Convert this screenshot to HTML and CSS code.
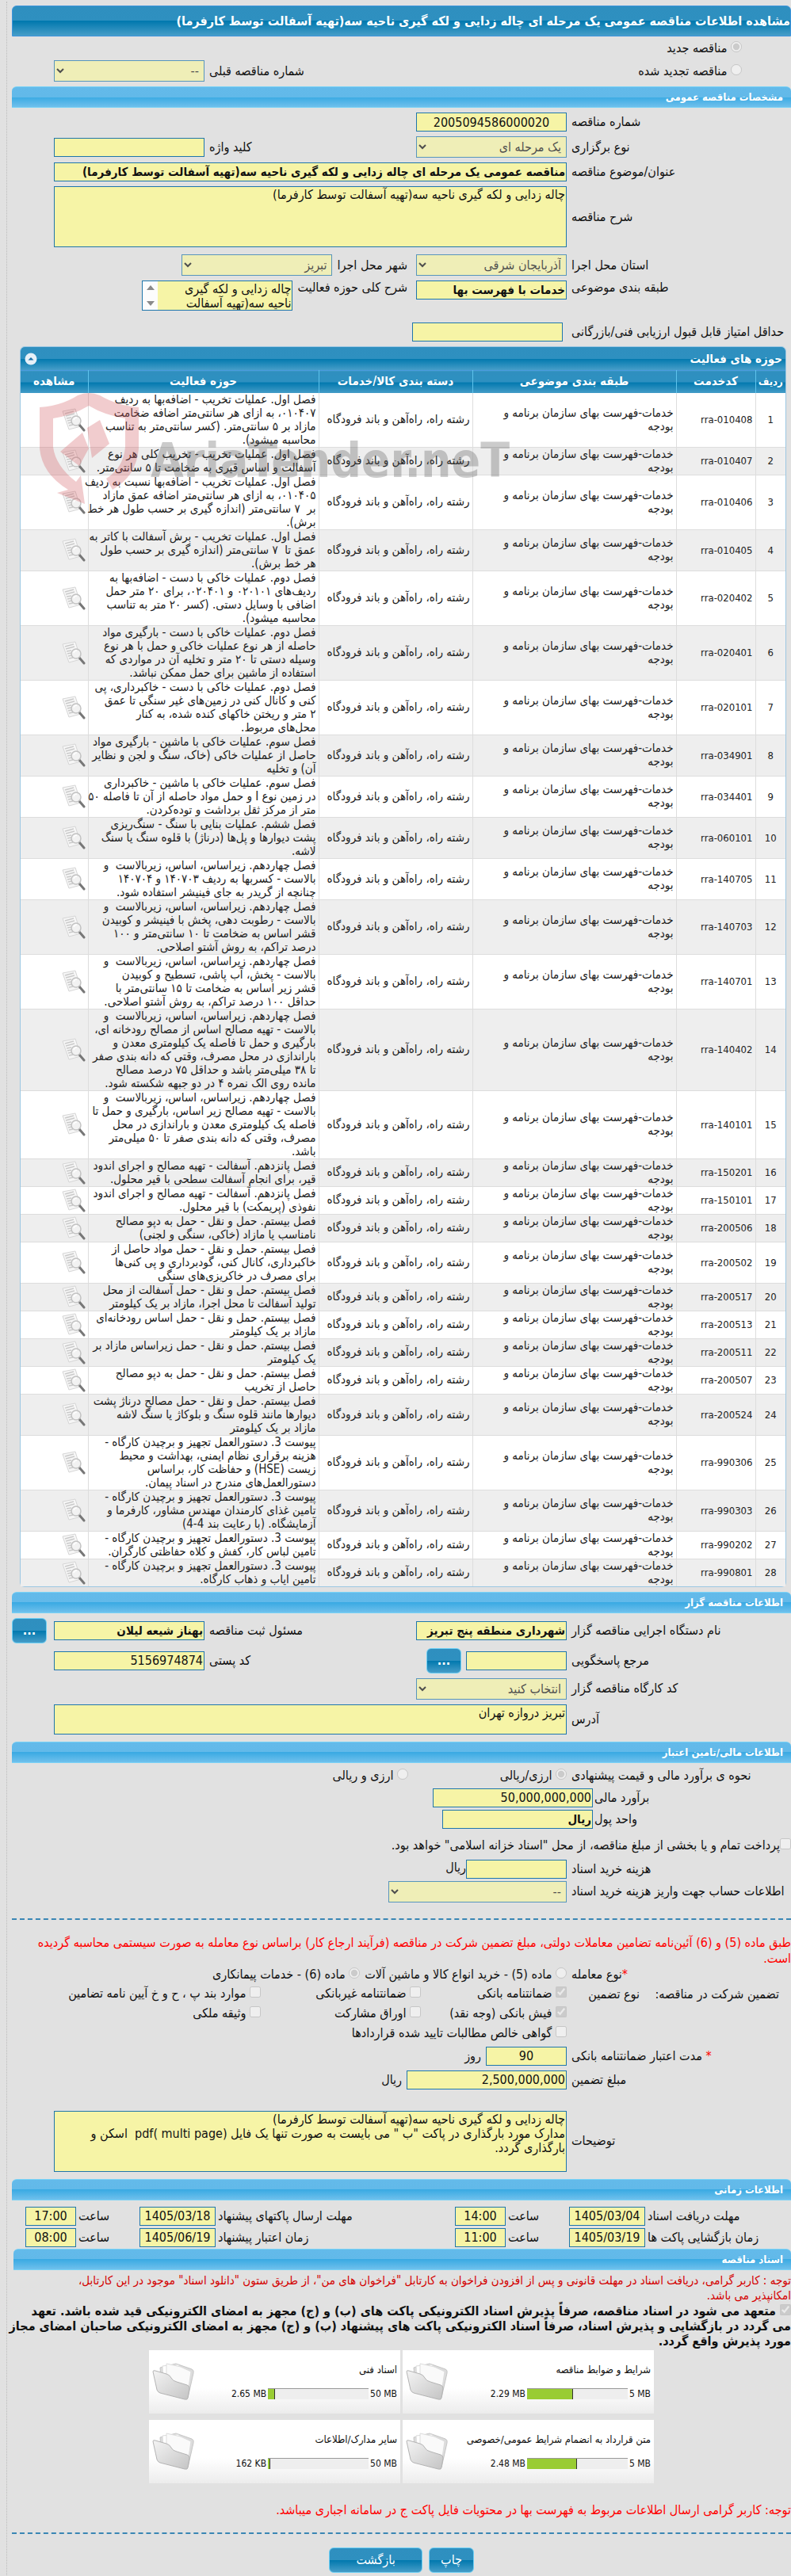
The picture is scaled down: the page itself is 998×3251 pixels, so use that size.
FILE: index.html
```html
<!DOCTYPE html>
<html lang="fa" dir="rtl">
<head>
  <meta charset="UTF-8">
  <meta name="viewport" content="width=device-width, initial-scale=1.0">
  <title>مشاهده اطلاعات مناقصه عمومی</title>
  <link rel="stylesheet" href="styles.css">
</head>
<body>

<!-- shared icons -->
<svg class="defs" width="0" height="0" aria-hidden="true">
  <defs>
    <linearGradient id="fold" x1="0" y1="0" x2="1" y2="1">
      <stop offset="0" stop-color="#f4f4f4"/>
      <stop offset="1" stop-color="#c4c4c4"/>
    </linearGradient>
  </defs>
  <symbol id="icon-view" viewBox="0 0 30 30">
    <path d="M1 4 L17 1 L24 23 L9 27 Z" fill="#f6f6f6" stroke="#d6d6d6"/>
    <path d="M4 7 l11 -3 M5 10 l11 -3 M6 13 l6 -1 M7 16 l5 -1 M8 19 l5 -1 M9 22 l5 -1" stroke="#cacaca" stroke-width="1.4" fill="none"/>
    <path d="M22 21 L28 28" stroke="#777" stroke-width="3" stroke-linecap="round"/>
    <circle cx="18" cy="16" r="6" fill="#f2f2f2" stroke="#c2c2c2" stroke-width="1.5"/>
    <path d="M15 15 a4 4 0 0 1 4 -3" stroke="#fff" stroke-width="1.5" fill="none"/>
  </symbol>
  <symbol id="icon-folder" viewBox="0 0 54 48">
    <path d="M10 6 L30 1 L50 8 Q53 9 52 13 L45 44 L12 34 Z" fill="#dcdcdc" stroke="#c6c6c6"/>
    <path d="M13 4 L32 2 L46 12 L42 36 L14 30 Z" fill="#fff" stroke="#dadada"/>
    <path d="M18 1 L36 5 L49 11 L45 38 L18 30 Z" fill="#fafafa" stroke="#dcdcdc"/>
    <path d="M1 11 Q1 9 4 10 L18 14 Q22 15 24 19 Q26 23 31 24 L44 28 Q47 29 47 32 L45 44 Q45 47 41 46 L10 38 Q7 37 6 34 Z" fill="url(#fold)" stroke="#b4b4b4"/>
  </symbol>
</svg>

<div class="page">
  <h1 class="title-bar">مشاهده اطلاعات مناقصه عمومی یک مرحله ای چاله زدایی و لکه گیری ناحیه سه(تهیه آسفالت توسط کارفرما)</h1>

  <div class="row kind first"><label><input type="radio" name="kind" checked disabled> مناقصه جدید</label></div>
  <div class="row kind">
    <label><input type="radio" name="kind" disabled> مناقصه تجدید شده</label>
    <label class="lbl2" for="prev">شماره مناقصه قبلی</label>
    <select id="prev" class="w-field" disabled><option>--</option></select>
    <span class="tail"></span>
  </div>

  <!-- مشخصات -->
  <h2 class="bar">مشخصات مناقصه عمومی</h2>
  <div class="row">
    <label class="lbl" for="num">شماره مناقصه</label>
    <input id="num" type="text" class="w-field center" value="2005094586000020" readonly>
  </div>
  <div class="row">
    <label class="lbl" for="type">نوع برگزاری</label>
    <select id="type" class="w-field" disabled><option>یک مرحله ای</option></select>
    <label class="lbl2" for="key">کلید واژه</label>
    <input id="key" type="text" class="w-field" readonly>
    <span class="tail"></span>
  </div>
  <div class="row">
    <label class="lbl" for="subject">عنوان/موضوع مناقصه</label>
    <input id="subject" type="text" class="fill strong" value="مناقصه عمومی یک مرحله ای چاله زدایی و لکه گیری ناحیه سه(تهیه آسفالت توسط کارفرما)" readonly>
    <span class="tail"></span>
  </div>
  <div class="row">
    <label class="lbl" for="desc">شرح مناقصه</label>
    <textarea id="desc" class="fill tall" readonly>چاله زدایی و لکه گیری ناحیه سه(تهیه آسفالت توسط کارفرما)</textarea>
    <span class="tail"></span>
  </div>
  <div class="row gap-top">
    <label class="lbl" for="state">استان محل اجرا</label>
    <select id="state" class="w-field" disabled><option>آذربایجان شرقی</option></select>
    <label class="next" for="city">شهر محل اجرا</label>
    <select id="city" class="w-field" disabled><option>تبریز</option></select>
  </div>
  <div class="row top">
    <label class="lbl" for="cat">طبقه بندی موضوعی</label>
    <input id="cat" type="text" class="w-field strong" value="خدمات با فهرست بها" readonly>
    <label class="next" for="scope">شرح کلی حوزه فعالیت</label>
    <textarea id="scope" class="w-field short scroll" readonly>چاله زدایی و لکه گیری ناحیه سه(تهیه آسفالت توسط کارفرما)</textarea>
  </div>
  <div class="row score">
    <label class="lbl" for="score">حداقل امتیاز قابل قبول ارزیابی فنی/بازرگانی</label>
    <input id="score" type="text" class="w-field" readonly>
  </div>

  <!-- حوزه های فعالیت -->
  <div class="panel">
    <div class="panel-head">
      <span>حوزه های فعالیت</span>
      <button type="button" class="collapse" aria-label="بستن">
        <svg width="16" height="16" viewBox="0 0 16 16"><circle cx="8" cy="8" r="7.5" fill="#e6f0f8"/><path d="M4.500 9.500 L8 6 L11.500 9.500 Z" fill="#1a6fa8"/></svg>
      </button>
    </div>
    <table>
      <colgroup>
        <col class="c-row"><col class="c-code"><col class="c-cat"><col class="c-group"><col class="c-act"><col class="c-view">
      </colgroup>
      <thead>
        <tr><th>ردیف</th><th>کدخدمت</th><th>طبقه بندی موضوعی</th><th>دسته بندی کالا/خدمات</th><th>حوزه فعالیت</th><th>مشاهده</th></tr>
      </thead>
      <tbody id="services"></tbody>
    </table>
    <svg class="watermark" viewBox="0 0 610 140" aria-hidden="true">
      <g fill="#d4595f" fill-rule="evenodd">
        <path d="M0 18 Q28 16 48 3 Q62 -3 76 3 Q98 16 125 18 V70 Q122 105 92 122 L84 108 Q106 94 108 68 V32 Q82 28 62 16 Q42 28 17 32 V68 Q20 92 46 112 L52 104 L57 140 L22 126 L36 122 Q3 102 0 70 Z"/>
        <path d="M26 74 L54 50 L62 70 L50 92 Z M60 44 L76 34 L88 64 L66 82 Z"/>
      </g>
      <text x="140" y="106">AriaTender.neT</text>
    </svg>
  </div>

  <!-- مناقصه گزار -->
  <h2 class="bar">اطلاعات مناقصه گزار</h2>
  <div class="row">
    <label class="lbl" for="org">نام دستگاه اجرایی مناقصه گزار</label>
    <input id="org" type="text" class="w-field strong" value="شهرداری منطقه پنج تبریز" readonly>
    <label class="lbl2" for="owner">مسئول ثبت مناقصه</label>
    <input id="owner" type="text" class="w-field strong" value="بهناز شیعه لیلان" readonly>
    <span class="tail"><button type="button" class="btn dots">...</button></span>
  </div>
  <div class="row">
    <label class="lbl" for="ref">مرجع پاسخگویی</label>
    <input id="ref" type="text" class="w-mid" readonly>
    <button type="button" class="btn dots">...</button>
    <label class="lbl2" for="post">کد پستی</label>
    <input id="post" type="text" class="w-field" value="5156974874" readonly>
    <span class="tail"></span>
  </div>
  <div class="row">
    <label class="lbl" for="shop">کد کارگاه مناقصه گزار</label>
    <select id="shop" class="w-field" disabled><option>انتخاب کنید</option></select>
  </div>
  <div class="row">
    <label class="lbl" for="addr">آدرس</label>
    <textarea id="addr" class="fill short" readonly>تبریز دروازه تهران</textarea>
    <span class="tail"></span>
  </div>

  <!-- مالی -->
  <h2 class="bar spaced">اطلاعات مالی/تامین اعتبار</h2>
  <div class="row options">
    <span class="lbl">نحوه ی برآورد مالی و قیمت پیشنهادی</span>
    <label class="opt opt-wide"><input type="radio" name="cur" checked disabled> ارزی/ریالی</label>
    <label class="opt"><input type="radio" name="cur" disabled> ارزی و ریالی</label>
  </div>
  <div class="row money">
    <label class="lbl" for="est">برآورد مالی</label>
    <input id="est" type="text" class="w-amount" value="50,000,000,000" readonly>
  </div>
  <div class="row money">
    <label class="lbl" for="unit">واحد پول</label>
    <input id="unit" type="text" class="w-field strong" value="ریال" readonly>
  </div>
  <div class="row treasury"><label><input type="checkbox" disabled>پرداخت تمام و یا بخشی از مبلغ مناقصه، از محل "اسناد خزانه اسلامی" خواهد بود.</label></div>
  <div class="row">
    <label class="lbl" for="cost">هزینه خرید اسناد</label>
    <span><input id="cost" type="text" class="w-mid" readonly>ریال</span>
  </div>
  <div class="row tight">
    <label class="lbl" for="acc">اطلاعات حساب جهت واریز هزینه خرید اسناد</label>
    <select id="acc" class="w-wide" disabled><option>--</option></select>
  </div>
  <hr>
  <p class="note">طبق ماده (5) و (6) آئین‌نامه تضامین معاملات دولتی، مبلغ تضمین شرکت در مناقصه (فرآیند ارجاع کار) براساس نوع معامله به صورت سیستمی محاسبه گردیده<br>است.</p>

  <div class="row options deal">
    <span class="lbl"><span class="req">*</span>نوع معامله</span>
    <label class="opt"><input type="radio" name="deal" disabled> ماده (5) - خرید انواع کالا و ماشین آلات</label>
    <label class="opt"><input type="radio" name="deal" checked disabled> ماده (6) - خدمات پیمانکاری</label>
  </div>
  <div class="guarantee">
    <span class="cap">تضمین شرکت در مناقصه:</span>
    <span class="kind-cap">نوع تضمین</span>
    <div class="checks">
      <label><input type="checkbox" checked disabled> ضمانتنامه بانکی</label>
      <label><input type="checkbox" disabled> ضمانتنامه غیربانکی</label>
      <label><input type="checkbox" disabled> موارد بند پ ، ح و خ آیین نامه تضامین</label>
      <label><input type="checkbox" checked disabled> فیش بانکی (وجه نقد)</label>
      <label><input type="checkbox" disabled> اوراق مشارکت</label>
      <label><input type="checkbox" disabled> وثیقه ملکی</label>
      <label class="span"><input type="checkbox" disabled> گواهی خالص مطالبات تایید شده قراردادها</label>
    </div>
  </div>
  <div class="row">
    <label class="lbl" for="days"><span class="req">*</span> مدت اعتبار ضمانتنامه بانکی</label>
    <input id="days" type="text" class="w-small center" value="90" readonly>
    <span>روز</span>
  </div>
  <div class="row">
    <label class="lbl" for="amount">مبلغ تضمین</label>
    <input id="amount" type="text" class="w-amount" value="2,500,000,000" readonly>
    <span>ریال</span>
  </div>
  <div class="row remarks">
    <label class="lbl" for="remarks">توضیحات</label>
    <textarea id="remarks" class="fill tall" readonly>چاله زدایی و لکه گیری ناحیه سه(تهیه آسفالت توسط کارفرما)
مدارک مورد بارگذاری در پاکت "ب " می بایست به صورت تنها یک فایل pdf( multi page)  اسکن و بارگذاری گردد.</textarea>
    <span class="tail"></span>
  </div>

  <!-- زمانی -->
  <h2 class="bar spaced">اطلاعات زمانی</h2>
  <div class="times">
    <label for="d1">مهلت دریافت اسناد</label><input id="d1" type="text" value="1405/03/04" readonly>
    <label for="t1">ساعت</label><input id="t1" type="text" value="14:00" readonly>
    <label for="d2">مهلت ارسال پاکتهای پیشنهاد</label><input id="d2" type="text" value="1405/03/18" readonly>
    <label for="t2">ساعت</label><input id="t2" type="text" value="17:00" readonly>
    <label for="d3">زمان بازگشایی پاکت ها</label><input id="d3" type="text" value="1405/03/19" readonly>
    <label for="t3">ساعت</label><input id="t3" type="text" value="11:00" readonly>
    <label for="d4">زمان اعتبار پیشنهاد</label><input id="d4" type="text" value="1405/06/19" readonly>
    <label for="t4">ساعت</label><input id="t4" type="text" value="08:00" readonly>
  </div>

  <!-- اسناد -->
  <h2 class="bar docs">اسناد مناقصه</h2>
  <p class="hint">توجه : کاربر گرامی، دریافت اسناد در مهلت قانونی و پس از افزودن فراخوان به کارتابل "فراخوان های من"، از طریق ستون "دانلود اسناد" موجود در این کارتابل،<br>امکانپذیر می باشد.</p>
  <label class="pledge"><input type="checkbox" checked disabled> متعهد می شود در اسناد مناقصه، صرفاً پذیرش اسناد الکترونیکی پاکت های (ب) و (ج) مجهز به امضای الکترونیکی قید شده باشد. تعهد<br>می گردد در بازگشایی و پذیرش اسناد، صرفاً اسناد الکترونیکی پاکت های پیشنهاد (ب) و (ج) مجهز به امضای الکترونیکی صاحبان امضای مجاز<br>مورد پذیرش واقع گردد.</label>
  <div class="files" id="files"></div>
  <p class="note last">توجه: کاربر گرامی ارسال اطلاعات مربوط به فهرست بها در محتویات فایل پاکت ج در سامانه اجباری میباشد.</p>
  <hr class="end">
  <div class="actions">
    <button type="button" class="btn">چاپ</button>
    <button type="button" class="btn back">بازگشت</button>
  </div>
</div>

<script>
  const services = [
    ["rra-010408", "فصل اول. عملیات تخریب - اضافه‌بها به ردیف|۰۱۰۴۰۷، به ازای هر سانتی‌متر اضافه ضخامت|مازاد بر ۵ سانتی‌متر. (کسر سانتی‌متر به تناسب|محاسبه میشود)."],
    ["rra-010407", "فصل اول. عملیات تخریب - تخریب کلی هر نوع|آسفالت و اساس قیری به ضخامت تا ۵ سانتی‌متر."],
    ["rra-010406", "فصل اول. عملیات تخریب - اضافه‌بها نسبت به ردیف|۰۱۰۴۰۵، به ازای هر سانتی‌متر اضافه عمق مازاد|بر  ۷ سانتی‌متر (اندازه گیری بر حسب طول هر خط|برش)."],
    ["rra-010405", "فصل اول. عملیات تخریب - برش آسفالت با کاتر به|عمق تا  ۷ سانتی‌متر (اندازه گیری بر حسب طول|هر خط برش)."],
    ["rra-020402", "فصل دوم. عملیات خاکی با دست - اضافه‌بها به|ردیف‌های ۰۲۰۱۰۱ و ۰۲۰۴۰۱، برای ۲۰ متر حمل|اضافی با وسایل دستی. (کسر ۲۰ متر به تناسب|محاسبه میشود)."],
    ["rra-020401", "فصل دوم. عملیات خاکی با دست - بارگیری مواد|حاصله از هر نوع عملیات خاکی و حمل با هر نوع|وسیله دستی تا ۲۰ متر و تخلیه آن در مواردی که|استفاده از ماشین برای حمل ممکن نباشد."],
    ["rra-020101", "فصل دوم. عملیات خاکی با دست - خاکبرداری، پی|کنی و کانال کنی در زمین‌های غیر سنگی تا عمق|۲ متر و ریختن خاکهای کنده شده، به کنار|محل‌های مربوط."],
    ["rra-034901", "فصل سوم. عملیات خاکی با ماشین - بارگیری مواد|حاصل از عملیات خاکی (خاک، سنگ و لجن و نظایر|آن) و تخلیه"],
    ["rra-034401", "فصل سوم. عملیات خاکی با ماشین - خاکبرداری|در زمین نوع I و حمل مواد حاصله از آن تا فاصله ۵۰|متر از مرکز ثقل برداشت و توده‌کردن."],
    ["rra-060101", "فصل ششم. عملیات بنایی با سنگ - سنگ‌ریزی|پشت دیوارها و پل‌ها (درناژ) با قلوه سنگ یا سنگ|لاشه."],
    ["rra-140705", "فصل چهاردهم. زیراساس، اساس، زیربالاست  و|بالاست - کسربها به ردیف ۱۴۰۷۰۳ و ۱۴۰۷۰۴|چنانچه از گریدر به جای فینیشر استفاده شود."],
    ["rra-140703", "فصل چهاردهم. زیراساس، اساس، زیربالاست  و|بالاست - رطوبت دهی، پخش با فینیشر و کوبیدن|قشر اساس به ضخامت تا ۱۰ سانتی‌متر و ۱۰۰|درصد تراکم، به روش آشتو اصلاحی."],
    ["rra-140701", "فصل چهاردهم. زیراساس، اساس، زیربالاست  و|بالاست - پخش، آب پاشی، تسطیح و کوبیدن|قشر زیر اساس به ضخامت تا ۱۵ سانتی‌متر با|حداقل ۱۰۰ درصد تراکم، به روش آشتو اصلاحی."],
    ["rra-140402", "فصل چهاردهم. زیراساس، اساس، زیربالاست  و|بالاست - تهیه مصالح اساس از مصالح رودخانه ای،|بارگیری و حمل تا فاصله یک کیلومتری معدن و|باراندازی در محل مصرف، وقتی که دانه بندی صفر|تا ۳۸ میلی‌متر باشد و حداقل ۷۵ درصد مصالح|مانده روی الک نمره ۴ در دو جبهه شکسته شود."],
    ["rra-140101", "فصل چهاردهم. زیراساس، اساس، زیربالاست  و|بالاست - تهیه مصالح زیر اساس، بارگیری و حمل تا|فاصله یک کیلومتری معدن و باراندازی در محل|مصرف، وقتی که دانه بندی صفر تا ۵۰ میلی‌متر|باشد."],
    ["rra-150201", "فصل پانزدهم. آسفالت - تهیه مصالح و اجرای اندود|قیر، برای انجام آسفالت سطحی با قیر محلول."],
    ["rra-150101", "فصل پانزدهم. آسفالت - تهیه مصالح و اجرای اندود|نفوذی (پریمکت) با قیر محلول."],
    ["rra-200506", "فصل بیستم. حمل و نقل - حمل به دپو مصالح|نامناسب یا مازاد (خاکی، سنگی و لجنی)"],
    ["rra-200502", "فصل بیستم. حمل و نقل - حمل مواد حاصل از|خاکبرداری، کانال کنی، گودبرداری و پی کنی‌ها|برای مصرف در خاکریزی‌های سنگی"],
    ["rra-200517", "فصل بیستم. حمل و نقل - حمل آسفالت از محل|تولید آسفالت تا محل اجرا، مازاد بر یک کیلومتر"],
    ["rra-200513", "فصل بیستم. حمل و نقل - حمل اساس رودخانه‌ای|مازاد بر یک کیلومتر"],
    ["rra-200511", "فصل بیستم. حمل و نقل - حمل زیراساس مازاد بر|یک کیلومتر"],
    ["rra-200507", "فصل بیستم. حمل و نقل - حمل به دپو مصالح|حاصل از تخریب"],
    ["rra-200524", "فصل بیستم. حمل و نقل - حمل مصالح درناژ پشت|دیوارها مانند قلوه سنگ و بلوکاژ یا سنگ لاشه|مازاد بر یک کیلومتر"],
    ["rra-990306", "پیوست 3. دستورالعمل تجهیز و برچیدن کارگاه -|هزینه برقراری نظام ایمنی، بهداشت و محیط|زیست (HSE) و حفاظت کار، براساس|دستورالعمل‌های مندرج در اسناد پیمان."],
    ["rra-990303", "پیوست 3. دستورالعمل تجهیز و برچیدن کارگاه -|تامین غذای کارمندان مهندس مشاور، کارفرما و|آزمایشگاه. (با رعایت بند 4-4)"],
    ["rra-990202", "پیوست 3. دستورالعمل تجهیز و برچیدن کارگاه -|تامین لباس کار، کفش و کلاه حفاظتی کارگران."],
    ["rra-990801", "پیوست 3. دستورالعمل تجهیز و برچیدن کارگاه -|تامین ایاب و ذهاب کارگاه."]
  ];

  document.getElementById("services").innerHTML = services.map(([code, text], i) => `
    <tr>
      <td class="num">${i + 1}</td>
      <td class="code">${code}</td>
      <td>خدمات-فهرست بهای سازمان برنامه و<br>بودجه</td>
      <td>رشته راه، راه‌آهن و باند فرودگاه</td>
      <td class="act">${text.split("|").join("<br>")}</td>
      <td><button type="button" class="view" aria-label="مشاهده"><svg width="30" height="30"><use href="#icon-view"/></svg></button></td>
    </tr>`).join("");

  const files = [
    { title: "شرایط و ضوابط مناقصه", max: "5 MB", size: "2.29 MB", pct: 46 },
    { title: "اسناد فنی", max: "50 MB", size: "2.65 MB", pct: 7 },
    { title: "متن قرارداد به انضمام شرایط عمومی/خصوصی", max: "5 MB", size: "2.48 MB", pct: 50 },
    { title: "سایر مدارک/اطلاعات", max: "50 MB", size: "162 KB", pct: 2 }
  ];

  document.getElementById("files").innerHTML = files.map(f => `
    <div class="file">
      <div class="file-body">
        <div>${f.title}</div>
        <div class="usage">
          <span dir="ltr">${f.max}</span>
          <div class="meter"><div class="meter-fill" style="width:${f.pct}%"></div></div>
          <span dir="ltr">${f.size}</span>
        </div>
      </div>
      <svg width="54" height="48"><use href="#icon-folder"/></svg>
    </div>`).join("");
</script>
</body>
</html>
```
FILE: styles.css
```css
* { box-sizing: border-box; }

body {
  margin: 0;
  background: #e1e1e1;
  color: #111;
  font: 16px/20px "DejaVu Sans Condensed", "DejaVu Sans", sans-serif;
}

.defs { position: absolute; }

.page {
  margin: 2px 0 0 8px;
  padding: 5px 0 5px 6px;
  border-left: 1px dotted #bbb;
  overflow: hidden;
}

h1, h2, p { margin: 0; }

/* bars */
.title-bar,
.panel-head,
th,
.btn {
  background: linear-gradient(#2f8fbf 0, #2e90c0 50%, #0078ae 50%, #469dc8 100%);
  color: #fff;
}

.title-bar {
  height: 39px;
  line-height: 38px;
  border: 1px solid #3c94dc;
  border-radius: 6px 6px 0 0;
  font-size: 16px;
  white-space: nowrap;
}

.bar {
  height: 27px;
  line-height: 26px;
  margin: 6px 0;
  padding: 0 10px;
  border: 1px solid #78d2f6;
  border-width: 1px 0;
  border-radius: 6px 6px 0 0;
  background: linear-gradient(#63baea 0, #62b9e9 50%, #3aaae3 50%, #6fc0ec 100%);
  color: #fff;
  font-size: 13px;
}

.bar.spaced { margin-top: 9px; }

/* form rows */
.row {
  display: flex;
  align-items: center;
  gap: 6px;
  margin-bottom: 6px;
}

.row.top { align-items: flex-start; }
.gap-top { margin-top: 9px; }

.lbl {
  flex: 0 0 277px;
  text-align: left;
  white-space: nowrap;
}

.row > .lbl,
.row > .lbl2,
.row > .next { line-height: 18px; }

.lbl2 { flex: 1; text-align: left; }
.next { margin-right: 5px; white-space: nowrap; }
.tail { flex: 0 0 47px; text-align: left; }
.fill { flex: 1; min-width: 0; }
.w-field { width: 190px; }
.w-mid { width: 127px; }
.w-amount { width: 202px; }
.w-wide { width: 225px; }
.w-small { width: 102px; }

input[type="text"],
select,
textarea {
  margin: 0;
  border: 1px solid #1f76ab;
  border-radius: 0;
  background: #f6f4a6;
  color: #111;
  font-family: inherit;
  font-size: 16px;
}

input[type="text"] { height: 24px; padding: 1px; vertical-align: top; }
input.center { text-align: center; }
input[type="text"].strong { font-size: 15px; font-weight: bold; }
select { height: 27px; padding: 0 2px; }

textarea {
  display: block;
  padding: 1px;
  resize: none;
  overflow: hidden;
  line-height: 18px;
}

textarea.tall { height: 77px; }
textarea.short { height: 38px; }

/* always shows both scroll arrows */
textarea.scroll {
  padding-left: 20px;
  background: #f6f4a6 url("data:image/svg+xml,%3Csvg xmlns='http://www.w3.org/2000/svg' width='19' height='36'%3E%3Crect width='19' height='36' fill='%23fcfcfc'/%3E%3Cpath d='M5 11l5-6 5 6zM5 25l5 6 5-6z' fill='%238a8a8a'/%3E%3C/svg%3E") no-repeat left top;
}

input[type="radio"],
input[type="checkbox"] {
  width: 14px;
  height: 14px;
  margin: 0;
}

.kind { padding-right: 62px; }
.kind.first { height: 30px; margin: 0; }
.score { margin: 15px 0 6px; }
.score .w-field { margin-right: 5px; }

/* services table */
.panel {
  position: relative;
  margin: 0 6px 0 10px;
  border: 1px solid #9cc7e2;
  border-radius: 6px;
  background: #fff;
}

.panel-head {
  display: flex;
  justify-content: space-between;
  align-items: center;
  height: 29px;
  padding: 0 4px 0 5px;
  border-radius: 5px 5px 0 0;
  font-size: 15px;
  font-weight: bold;
}

.collapse,
.view {
  display: block;
  padding: 0;
  border: 0;
  background: none;
}

.collapse svg,
.view svg { display: block; }

table {
  width: 100%;
  table-layout: fixed;
  border-collapse: collapse;
  font-size: 15px;
  line-height: 17px;
}

.c-row { width: 38px; }
.c-code { width: 100px; }
.c-cat { width: 257px; }
.c-group { width: 194px; }
.c-view { width: 85px; }

th {
  height: 28px;
  padding: 0;
  border-left: 1px solid #5ec3ec;
  border-top: 1px solid #4a9be0;
  white-space: nowrap;
}

th:first-child { font-size: 13px; }
th:last-child { border-left: 0; }

td {
  padding: 0 3px;
  border-left: 1px solid #ddd;
  border-bottom: 1px solid #ddd;
  color: #222;
  white-space: nowrap;
}

td:last-child { border-left: 0; }
td.num { text-align: center; }
td.num, td.code { font-size: 13px; }
td.act { white-space: pre; }
tbody tr:nth-child(even) { background: #eee; }
tbody tr:last-child td { border-bottom: 0; }

.watermark {
  position: absolute;
  left: 24px;
  top: 58px;
  width: 610px;
  height: 140px;
  opacity: 0.3;
  pointer-events: none;
}

.watermark text {
  direction: ltr;
  fill: #555;
  font: bold 60px "DejaVu Sans Condensed", sans-serif;
}

/* buttons */
.btn {
  height: 32px;
  padding: 0 14px;
  border: 1px solid #6ed0f5;
  border-radius: 6px;
  font: 16px "DejaVu Sans Condensed", "DejaVu Sans", sans-serif;
}

.btn.dots { width: 44px; padding: 0; font-weight: bold; }
.btn.back { width: 118px; }
.tail .btn { display: block; margin-right: 3px; }

/* financial part */
.options { height: 20px; }
.opt { white-space: nowrap; }
.opt-wide { width: 194px; }
.money { gap: 2px; margin-bottom: 3px; }
.money .lbl { flex-basis: 248px; }
.treasury { height: 36px; margin: 0; }
.tight { margin-top: -3px; }

hr {
  height: 0;
  margin: 20px 0 19px;
  border: 0;
  border-top: 2px dashed #3a86b4;
}

.note { color: #f00; }
.req { color: #f00; }
.deal { margin-bottom: 2px; }

.guarantee {
  display: flex;
  padding-right: 15px;
  margin-bottom: 4px;
}

.guarantee .cap { width: 162px; padding-top: 3px; }
.guarantee .kind-cap { width: 106px; padding-top: 3px; padding-right: 14px; }

.checks {
  display: grid;
  grid-template-columns: 184px 202px 1fr;
  grid-auto-rows: 25px;
  align-items: center;
  flex: 1;
  white-space: nowrap;
}

.checks .span { grid-column: 1 / -1; }
.remarks { margin-top: 27px; }

/* deadlines */
.times {
  display: grid;
  grid-template-columns: 181px 96px 74px 64px 1fr 96px 74px 64px 14px;
  gap: 3px;
  padding-top: 2px;
  text-align: left;
}

.times label { align-self: center; white-space: nowrap; }
.times input { width: 100%; min-width: 0; text-align: center; }
.times label:nth-child(9) { grid-column: 1; }

.bar.docs { margin: 2px 0 4px 2px; }

.hint {
  color: #d40000;
  font-size: 15px;
  line-height: 19px;
  white-space: nowrap;
}

.pledge {
  display: block;
  font-weight: bold;
  line-height: 19px;
  white-space: nowrap;
}

/* uploaded files */
.files {
  display: grid;
  grid-template-columns: 317px 317px;
  justify-content: center;
  gap: 8px 3px;
  margin: 2px 0 24px;
  font-size: 13px;
}

.file {
  display: flex;
  align-items: center;
  justify-content: space-between;
  height: 80px;
  padding: 0 4px;
  background: linear-gradient(#fff 60%, #ececec);
}

.file-body { display: grid; gap: 10px; white-space: nowrap; }
.usage { display: flex; gap: 2px; align-items: center; font-size: 12px; }

.meter {
  direction: ltr;
  width: 127px;
  height: 14px;
  border-top: 1px solid #999;
  background: #eee;
}

.meter-fill {
  height: 13px;
  border-right: 1px solid #333;
  background: #9c3;
}

hr.end { margin: 18px 0 17px; }
.actions { display: flex; justify-content: center; gap: 8px; }
```
